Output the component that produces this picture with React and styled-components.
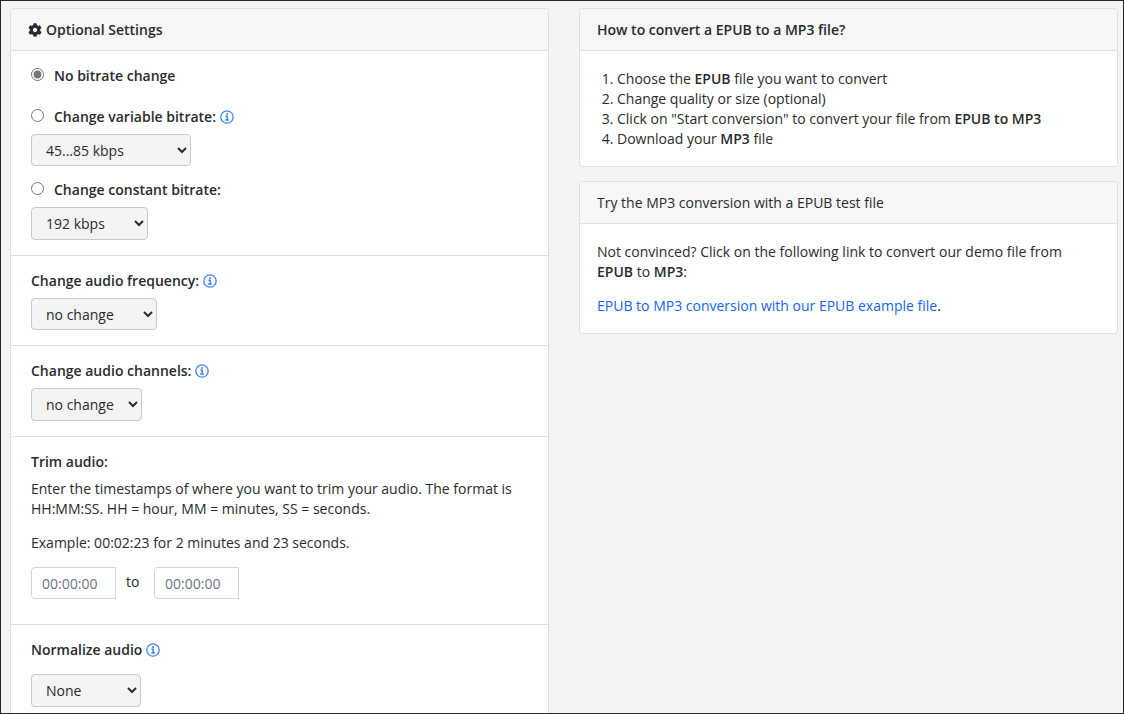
import React from 'react';
import styled, { createGlobalStyle, css } from 'styled-components';
import { FaCog } from 'react-icons/fa';

const GlobalStyle = createGlobalStyle`
  *, *::before, *::after {
    box-sizing: border-box;
  }
  body {
    margin: 0;
    background: #f4f4f4;
    color: #292b2c;
    font: 14px/20px "Open Sans", sans-serif;
  }
  p, h2, ol {
    margin: 0;
  }
  strong {
    font-weight: 600;
  }
`

const Page = styled.main`
  display: grid;
  grid-template-columns: 1fr 1fr;
  gap: 30px;
  align-items: start;
  height: 100vh;
  padding: 7px 5px 0 9px;
  border: 1px solid #28282c;
  overflow: hidden;
`

const Column = styled.div`
  display: flex;
  flex-direction: column;
  gap: 14px;
`

const Card = styled.section`
  background: #fff;
  border: 1px solid #dfdfdf;
  border-radius: 4px;
  overflow: hidden;
`

const CardHeader = styled.h2`
  display: flex;
  align-items: center;
  gap: 4px;
  padding: 11px 17px 10px;
  background: #f7f7f7;
  border-bottom: 1px solid #dfdfdf;
  font-size: 14px;
  line-height: 20px;
  font-weight: ${props => props.$light ? '400' : '600'};
`

const CardBody = styled.div`
  display: flex;
  flex-direction: column;
  gap: 14px;
  padding: 18px 17px 17px;
`

const Steps = styled.ol`
  padding-left: 20px;
`

const Link = styled.a`
  color: #1266f1;
  text-decoration: none;
  &:hover {
    text-decoration: underline;
  }
`

const Section = styled.div`
  display: flex;
  flex-direction: column;
  gap: ${props => props.$gap || '7px'};
  padding: 15px 20px;
  & + & {
    border-top: 1px solid #dfdfdf;
  }
`

const Options = styled.div`
  display: flex;
  flex-direction: column;
  align-items: flex-start;
  gap: 7px;
  margin-top: ${props => props.$first ? '14px' : '7px'};
`

const LabelRow = styled.div`
  display: flex;
  align-items: center;
  gap: 4px;
`

const Label = styled.label`
  font-weight: 600;
`

const Radio = styled.input.attrs({ type: 'radio', name: 'bitrate' })`
  width: 13px;
  height: 13px;
  margin: 0 6px 3px 0;
  accent-color: #767676;
`

const control = css`
  font: inherit;
  color: #292b2c;
  border: 1px solid #ced4da;
`

const Select = styled.select`
  ${control}
  align-self: flex-start;
  width: ${props => props.$width};
  height: ${props => props.$tall ? '33px' : '32px'};
  padding: 0 4px 0 10px;
  background: #f4f4f4;
  border-color: #c8c8c8;
  border-radius: 4px;
`

const TimeInput = styled.input.attrs({ type: 'text', placeholder: '00:00:00' })`
  ${control}
  width: 85px;
  height: 32px;
  padding: 1px 10px 0;
  background: #fff;
  border-radius: 4px 0 0 4px;
  &::placeholder {
    color: #6c757d;
  }
`

const TrimText = styled.div`
  display: flex;
  flex-direction: column;
  gap: 14px;
`

const TimeRow = styled.div`
  display: flex;
  align-items: center;
  margin-bottom: 10px;
`

const Separator = styled.span`
  width: 38px;
  padding: 0 0 2px 10px;
`

const GearIcon = styled(FaCog)`
  width: 14px;
  height: 14px;
`

const InfoSvg = styled.svg`
  display: block;
  width: 14px;
  height: 14px;
  color: #3f83f8;
`

const InfoIcon = () => (
  <InfoSvg viewBox="0 0 14 14" fill="none" stroke="currentColor" aria-hidden="true">
    <circle cx="7" cy="7" r="6.2" strokeWidth="1.3" />
    <path d="M5.4 6.3H7.2V9.9M5.2 10H8.9" strokeWidth="1.5" />
    <circle cx="7" cy="4" r="1" fill="currentColor" stroke="none" />
  </InfoSvg>
)

const SelectField = ({ id, width, tall, options }) => (
  <Select id={id} $width={width} $tall={tall}>
    {options.map(option => <option key={option}>{option}</option>)}
  </Select>
)

const App = () => (
  <>
    <GlobalStyle />
    <Page>
      <Card>
        <CardHeader><GearIcon />Optional Settings</CardHeader>
        <Section>
          <LabelRow>
            <Radio id="none" defaultChecked />
            <Label htmlFor="none">No bitrate change</Label>
          </LabelRow>
          <Options $first>
            <LabelRow>
              <Radio id="variable" />
              <Label htmlFor="variable">Change variable bitrate:</Label>
              <InfoIcon />
            </LabelRow>
            <Select aria-label="Variable bitrate" $width="160px">
              <option>45...85 kbps</option>
            </Select>
          </Options>
          <Options>
            <LabelRow>
              <Radio id="constant" />
              <Label htmlFor="constant">Change constant bitrate:</Label>
            </LabelRow>
            <Select aria-label="Constant bitrate" $width="117px" $tall>
              <option>192 kbps</option>
            </Select>
          </Options>
        </Section>
        <Section>
          <LabelRow>
            <Label htmlFor="frequency">Change audio frequency:</Label>
            <InfoIcon />
          </LabelRow>
          <SelectField id="frequency" width="126px" options={['no change']} />
        </Section>
        <Section>
          <LabelRow>
            <Label htmlFor="channels">Change audio channels:</Label>
            <InfoIcon />
          </LabelRow>
          <SelectField id="channels" width="111px" tall options={['no change']} />
        </Section>
        <Section>
          <Label htmlFor="trim-start">Trim audio:</Label>
          <TrimText>
            <p>
              Enter the timestamps of where you want to trim your audio. The format is
              HH:MM:SS. HH = hour, MM = minutes, SS = seconds.
            </p>
            <p>Example: 00:02:23 for 2 minutes and 23 seconds.</p>
            <TimeRow>
              <TimeInput id="trim-start" />
              <Separator>to</Separator>
              <TimeInput id="trim-end" aria-label="Trim end" />
            </TimeRow>
          </TrimText>
        </Section>
        <Section $gap="14px">
          <LabelRow>
            <Label htmlFor="normalize">Normalize audio</Label>
            <InfoIcon />
          </LabelRow>
          <SelectField id="normalize" width="110px" tall options={['None']} />
        </Section>
      </Card>
      <Column>
        <Card>
          <CardHeader>How to convert a EPUB to a MP3 file?</CardHeader>
          <CardBody>
            <Steps>
              <li>Choose the <strong>EPUB</strong> file you want to convert</li>
              <li>Change quality or size (optional)</li>
              <li>Click on "Start conversion" to convert your file from <strong>EPUB to MP3</strong></li>
              <li>Download your <strong>MP3</strong> file</li>
            </Steps>
          </CardBody>
        </Card>
        <Card>
          <CardHeader $light>Try the MP3 conversion with a EPUB test file</CardHeader>
          <CardBody>
            <p>
              Not convinced? Click on the following link to convert our demo file from{' '}
              <strong>EPUB</strong> to <strong>MP3</strong>:
            </p>
            <p><Link href="#example">EPUB to MP3 conversion with our EPUB example file</Link>.</p>
          </CardBody>
        </Card>
      </Column>
    </Page>
  </>
)

export default App
